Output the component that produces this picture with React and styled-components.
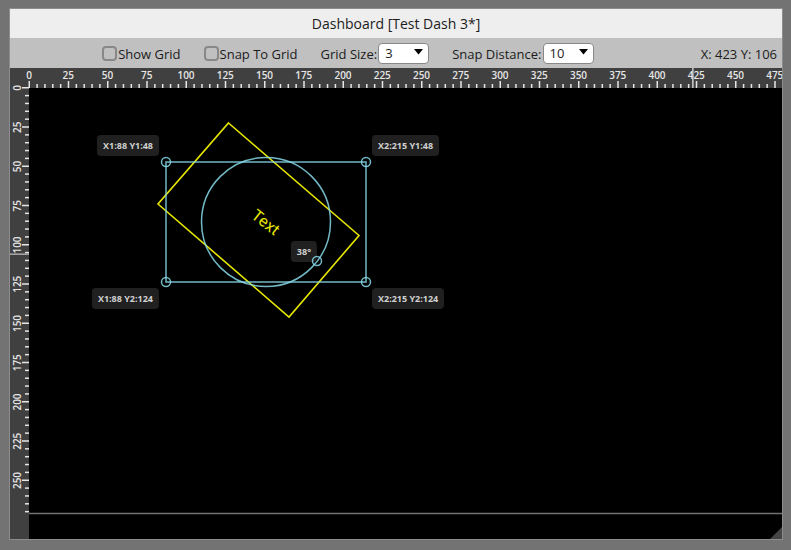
import React from "react";
import styled, { createGlobalStyle } from "styled-components";

const SCALE = 1.57;
const FONT = '"Open Sans", "Noto Sans", sans-serif';
const CYAN = "#86d8e8";

const GlobalStyle = createGlobalStyle`
  *, *::before, *::after { box-sizing: border-box; }
  body { margin: 0; background: #737373; font-family: ${FONT}; }
`;

const Page = styled.div`
  min-height: 100vh;
  display: flex;
  padding: 8px 8px 10px 9px;
`;

const Window = styled.main`
  flex: 1;
  min-width: 0;
  display: flex;
  flex-direction: column;
  border: 1px solid #8c8c8c;
  background: #000;
`;

const TitleBar = styled.h1`
  margin: 0;
  height: 29px;
  background: #eee;
  color: #1c1c1c;
  font-size: 14px;
  font-weight: 400;
  line-height: 29px;
  text-align: center;
`;

const Toolbar = styled.div`
  height: 30px;
  display: flex;
  align-items: center;
  padding: 2px 5px 0 0;
  background: #c0c0c0;
  color: #1c1c1c;
  font-size: 13px;
  line-height: 20px;
  white-space: nowrap;
`;

const Options = styled.div`
  flex: 1;
  display: flex;
  align-items: center;
  justify-content: center;
  gap: 23px;
  padding-right: 15px;
`;

const Option = styled.label`
  display: flex;
  align-items: center;
  gap: 1px;
`;

const Checkbox = styled.input`
  appearance: none;
  width: 15px;
  height: 15px;
  margin: 0 0 2px;
  border: 2px solid #888;
  border-radius: 4px;
  background: transparent;
  &:checked { background: #444; }
`;

const SelectBox = styled.span`
  position: relative;
  display: flex;
  margin-bottom: 2px;
`;

const Select = styled.select`
  appearance: none;
  width: 51px;
  height: 21px;
  padding: 0 16px 0 6px;
  border: 1px solid #888;
  border-radius: 4px;
  background: #fff;
  color: #1c1c1c;
  font-family: ${FONT};
  font-size: 13px;
  line-height: 19px;
`;

const Arrow = styled.svg`
  position: absolute;
  top: 6px;
  right: 6px;
  pointer-events: none;
`;

const Workspace = styled.div`
  flex: 1;
  display: grid;
  grid-template: 20px 1fr / 19px minmax(0, 1fr);
  overflow: hidden;
`;

const Corner = styled.div`
  background: #404040;
`;

const RulerStrip = styled.svg`
  display: block;
  width: 100%;
  height: 100%;
  min-height: 0;
  overflow: visible;
  background: #404040;
  fill: #e6e6e6;
  font-family: ${FONT};
  font-size: 10px;
  font-weight: 600;
  text-anchor: middle;
`;

const Canvas = styled.section`
  position: relative;
  min-width: 0;
  overflow: hidden;
  background: #000;
`;

const Drawing = styled.svg`
  position: absolute;
  inset: 0;
  width: 100%;
  height: 100%;
  fill: none;
`;

const ObjectText = styled.text`
  fill: #e6e600;
  font-family: Roboto, sans-serif;
  font-size: 16px;
  text-anchor: middle;
`;

const Tag = styled.span`
  position: absolute;
  left: ${(p) => p.$x}px;
  top: ${(p) => p.$y}px;
  padding: 0 6px;
  border-radius: 4px;
  background: #202020;
  color: #d0d0d0;
  font-size: 9px;
  font-weight: 700;
  line-height: 21px;
  white-space: nowrap;
  transform: translateX(${(p) => (p.$alignRight ? "-100%" : "0")});
`;

const ResizeGrip = styled.svg`
  position: absolute;
  right: 0;
  bottom: 0;
`;

const tags = [
  { text: "X1:88 Y1:48", x: 130, y: 47, alignRight: true },
  { text: "X2:215 Y1:48", x: 343, y: 47 },
  { text: "X1:88 Y2:124", x: 130, y: 200, alignRight: true },
  { text: "X2:215 Y2:124", x: 343, y: 200 },
  { text: "38°", x: 288, y: 153, alignRight: true },
];

const handles = [[137, 74], [337, 74], [137, 194], [337, 194], [288, 173]];

function Ruler({ vertical, max, cursor }) {
  const values = Array.from({ length: max / 5 + 1 }, (_, i) => i * 5);
  return (
    <RulerStrip role="img" aria-label={vertical ? "Vertical ruler" : "Horizontal ruler"}>
      {values.map((value) => {
        const major = value % 25 === 0;
        const at = value * SCALE;
        const size = major ? 7 : 4;
        return (
          <g key={value}>
            {vertical ? (
              <rect x={19 - size} y={at - 1} width={size} height="1.5" />
            ) : (
              <rect x={at - 0.5} y={20 - size} width="1.5" height={size} />
            )}
            {major &&
              (vertical ? (
                <text transform={`translate(11 ${at}) rotate(-90)`}>{value}</text>
              ) : (
                <text x={at} y="11">{value}</text>
              ))}
          </g>
        );
      })}
      {vertical ? (
        <rect x="0" y={cursor * SCALE - 1} width="19" height="1.5" fill="#aaa" />
      ) : (
        <rect x={cursor * SCALE - 1} y="0" width="1.5" height="20" fill="#ccc" />
      )}
    </RulerStrip>
  );
}

function ToggleOption({ label }) {
  return (
    <Option>
      <Checkbox type="checkbox" />
      {label}
    </Option>
  );
}

function SelectOption({ label, options, value }) {
  return (
    <Option>
      {label}
      <SelectBox>
        <Select defaultValue={value}>
          {options.map((option) => (
            <option key={option}>{option}</option>
          ))}
        </Select>
        <Arrow width="9" height="6" viewBox="0 0 9 6" aria-hidden="true">
          <path d="M0 0h9L4.5 5.5z" fill="#000" />
        </Arrow>
      </SelectBox>
    </Option>
  );
}

export default function App() {
  return (
    <Page>
      <GlobalStyle />
      <Window>
        <TitleBar>Dashboard [Test Dash 3*]</TitleBar>
        <Toolbar>
          <Options>
            <ToggleOption label="Show Grid" />
            <ToggleOption label="Snap To Grid" />
            <SelectOption label="Grid Size:" options={[1, 2, 3, 5, 10]} value={3} />
            <SelectOption label="Snap Distance:" options={[1, 5, 10, 20]} value={10} />
          </Options>
          <span>X: 423 Y: 106</span>
        </Toolbar>
        <Workspace>
          <Corner />
          <Ruler max={475} cursor={423} />
          <Ruler vertical max={270} cursor={106} />
          <Canvas>
            {tags.map((tag) => (
              <Tag key={tag.text} $x={tag.x} $y={tag.y} $alignRight={tag.alignRight}>
                {tag.text}
              </Tag>
            ))}
            <Drawing role="img" aria-label="Rotated text object with selection box">
              <path d="M0 425.5H4000" stroke="#727272" strokeWidth="1.5" />
              <path d="M199.5 35L330 147.5L260 229L129 116z" stroke="#e6e600" strokeWidth="1.6" />
              <ObjectText transform="translate(237 134) rotate(38)" y="6">
                Text
              </ObjectText>
              <g stroke={CYAN} strokeOpacity="0.85" strokeWidth="1.5">
                <rect x="137" y="74" width="200" height="120" />
                <circle cx="237" cy="134" r="64.5" />
                {handles.map(([x, y]) => (
                  <circle key={`${x}-${y}`} cx={x} cy={y} r="4.5" />
                ))}
              </g>
            </Drawing>
            <ResizeGrip width="12" height="12" viewBox="0 0 12 12" aria-hidden="true">
              <path d="M12 0v12H0z" fill="#454545" />
            </ResizeGrip>
          </Canvas>
        </Workspace>
      </Window>
    </Page>
  );
}
